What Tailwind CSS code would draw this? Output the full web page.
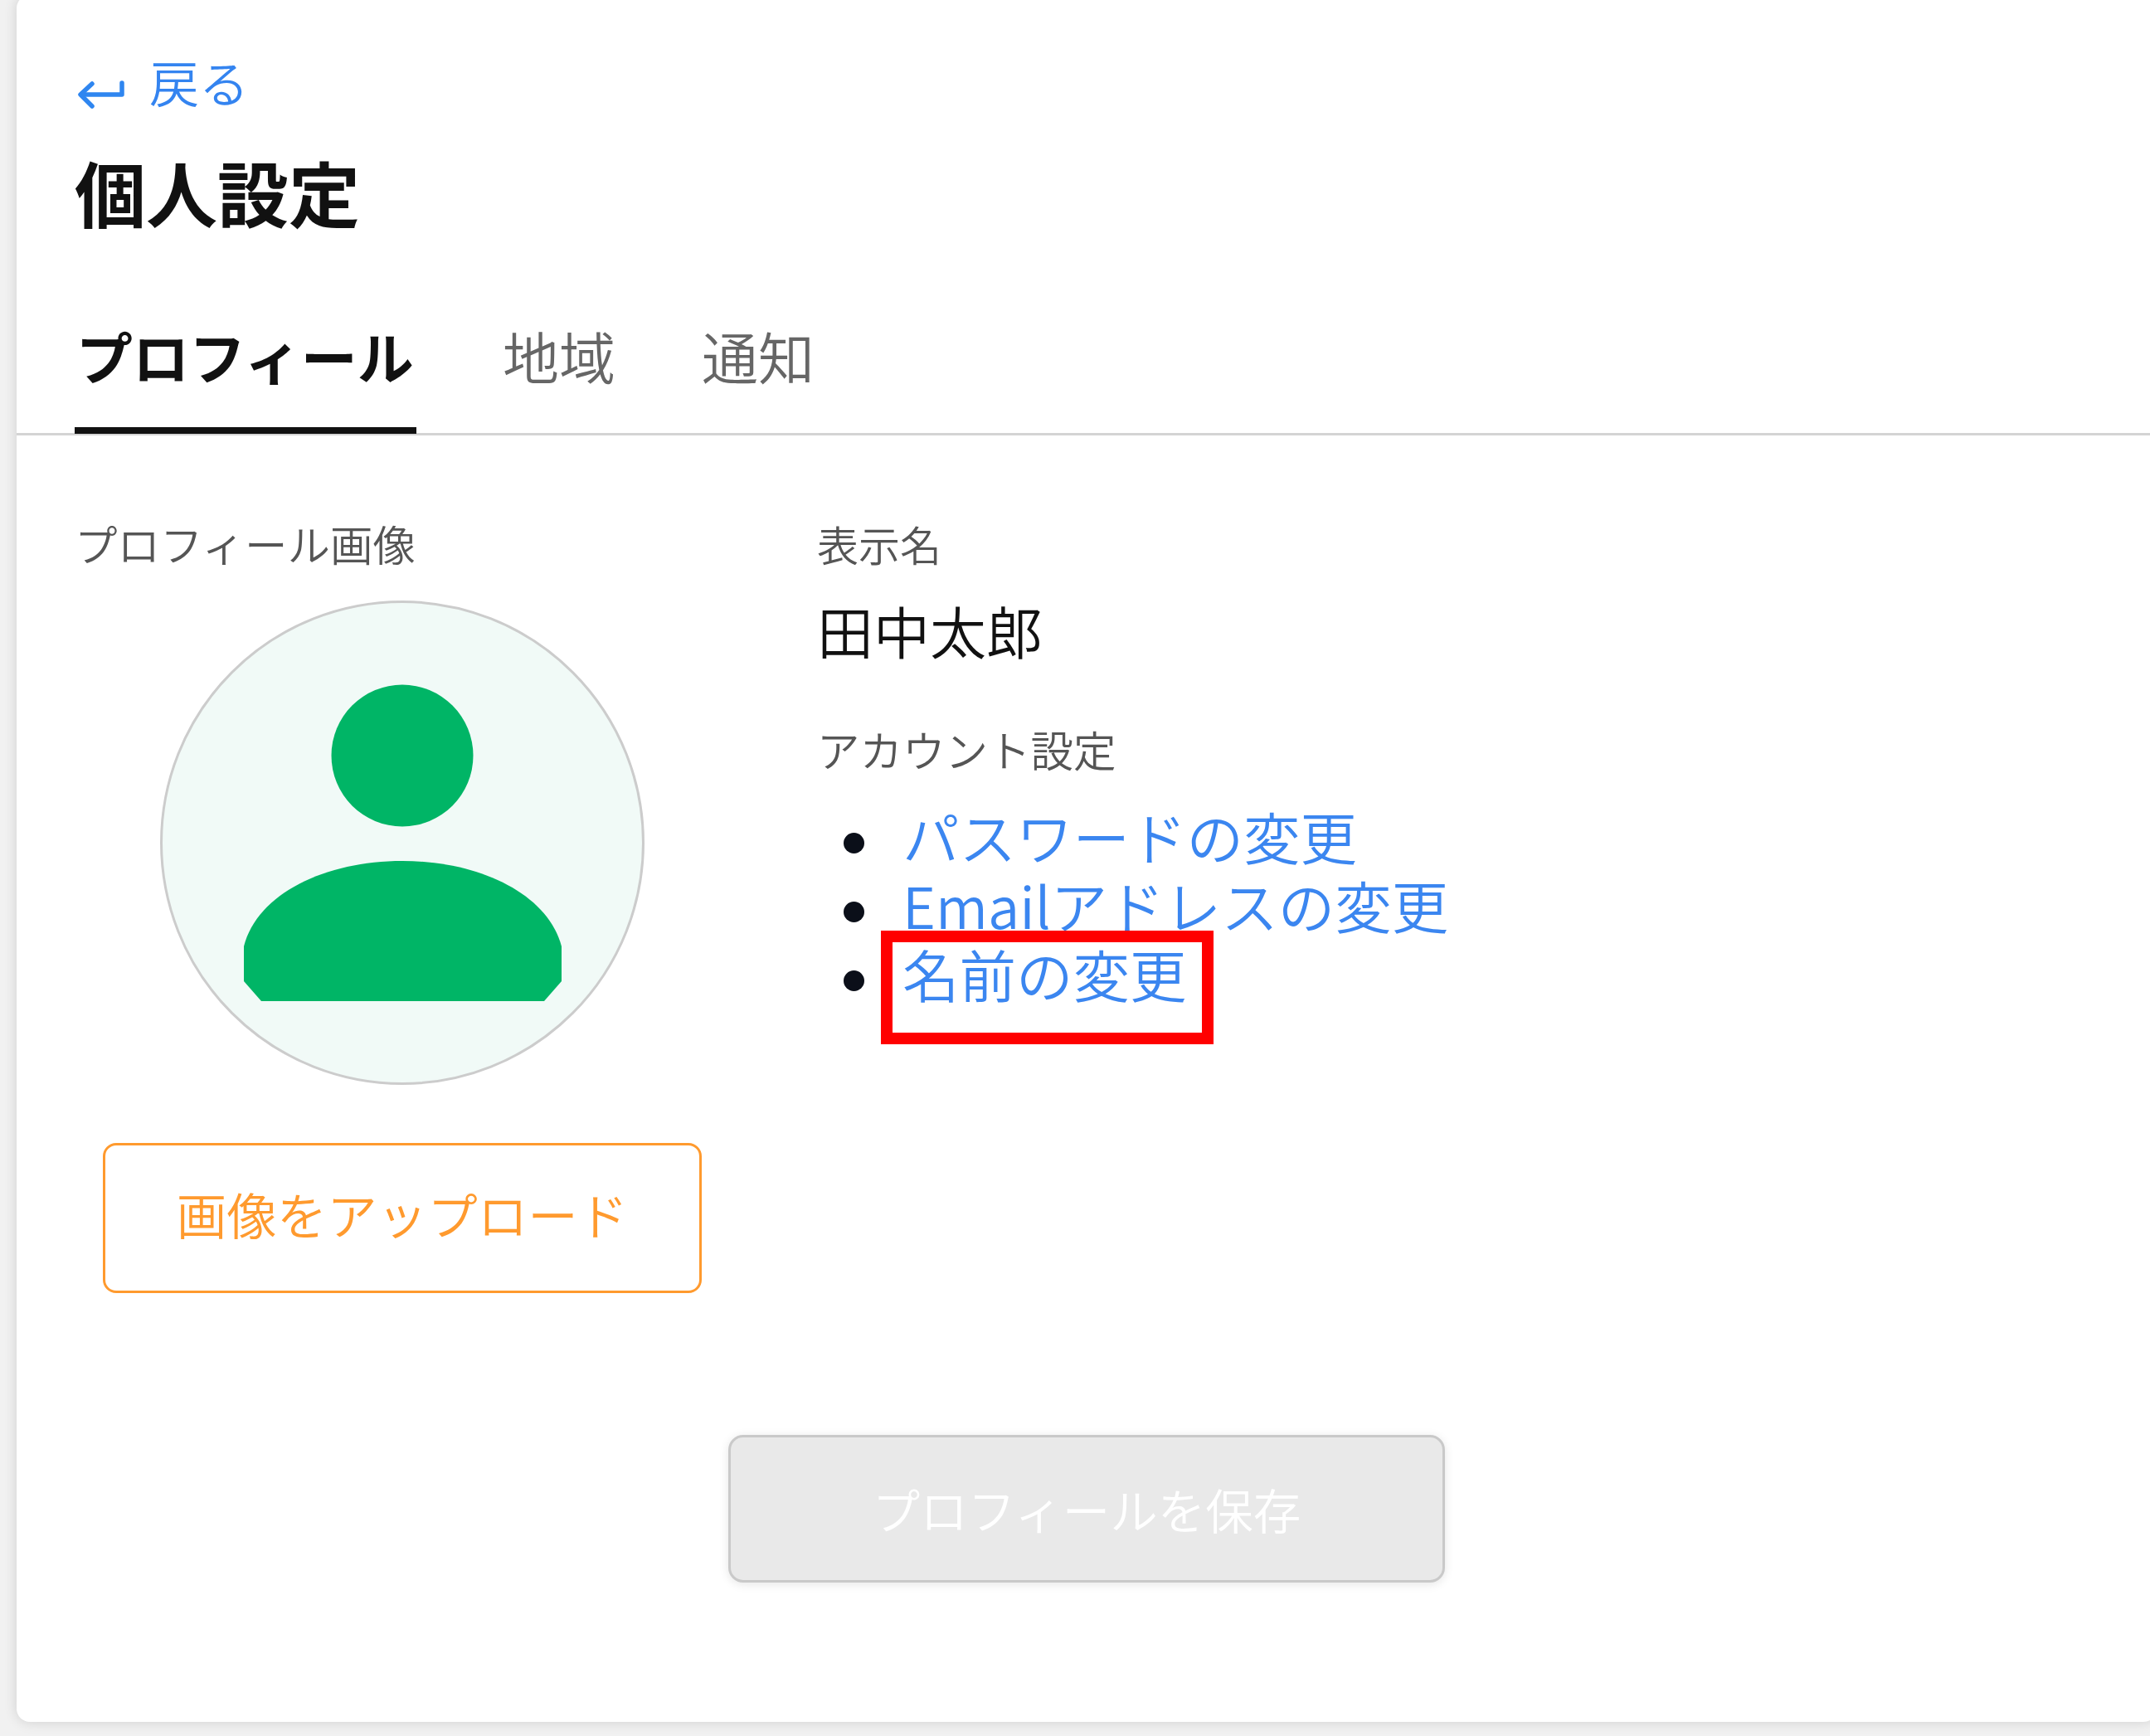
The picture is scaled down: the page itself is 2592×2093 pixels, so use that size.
<!DOCTYPE html>
<html lang="ja">

<head>
    <meta charset="UTF-8">
    <meta name="viewport" content="width=device-width, initial-scale=1.0">
    <title>個人設定</title>
    <script src="https://cdn.jsdelivr.net/npm/@tailwindcss/browser@4"></script>
</head>

<body class="h-[2093px] overflow-hidden bg-[#f1f1f1] font-['Noto_Sans_CJK_JP','Noto_Sans',sans-serif]">

    <!-- Card -->
    <div class="ml-[20px] -mt-[6px] h-[2082px] w-[2580px] rounded-[16px] bg-white pt-[74px] shadow-[0_0_16px_rgba(0,0,0,0.14)]">

        <div class="px-[70px]">
            <a class="flex items-start gap-[28px] text-[#3484f0]">
                <svg class="mt-[29px] w-[62px] h-[34px]" viewBox="0 0 62 34" fill="none" stroke="#2f86f0" stroke-width="5.5" stroke-linecap="round" stroke-linejoin="round">
                    <path d="M57 3V17H8"/>
                    <path d="M21 4L7 17L21 31"/>
                </svg>
                <span class="text-[60px] leading-[60px] font-[350]">戻る</span>
            </a>
            <h1 class="mt-[57px] text-[86px] leading-[86px] font-bold text-[#111111]">個人設定</h1>
        </div>

        <!-- Tabs -->
        <div class="mt-[121px] flex gap-[104px] border-b-[3px] border-[#d4d4d4] px-[70px]">
            <div class="-mb-[1px] w-[412px] border-b-[8px] border-[#111111] pb-[52px] pl-[2px] text-[68px] leading-[68px] font-bold text-[#111111]">プロフィール</div>
            <div class="text-[68px] leading-[68px] font-[350] text-[#666666]">地域</div>
            <div class="text-[68px] leading-[68px] font-[350] text-[#666666]">通知</div>
        </div>

        <!-- Profile -->
        <div class="mt-[105px] flex px-[70px]">
            <div class="flex w-[790px] flex-col items-center">
                <p class="self-start text-[51.5px] leading-[50px] font-[350] text-[#555555]">プロフィール画像</p>
                <div class="mt-[44px] size-[584px] rounded-full border-[3px] border-[#cccccc] bg-[#f1faf7]">
                    <svg class="size-full" viewBox="0 0 578 578" fill="#00b566">
                        <circle cx="289" cy="184" r="85.5"/>
                        <path d="M98 414C114 350 197 311 289 311C381 311 464 350 481 414V456L460 480H119L98 456Z"/>
                    </svg>
                </div>
                <button class="mt-[70px] h-[181px] w-[722px] rounded-[16px] border-[3px] border-[#ff9a2e] pb-[12px] text-[60.5px] leading-[60px] font-[350] text-[#ff9a2e]">画像をアップロード</button>
            </div>

            <div class="ml-[105px]">
                <p class="text-[50px] leading-[50px] font-[350] text-[#555555]">表示名</p>
                <p class="mt-[46px] text-[68px] leading-[68px] font-[350] text-[#111111]">田中太郎</p>
                <p class="mt-[84px] text-[51.5px] leading-[50px] font-[350] text-[#555555]">アカウント設定</p>
                <ul class="mt-[38px] pl-[32px] text-[68.5px] leading-[83px] font-[350]">
                    <li class="flex items-center gap-[46px]">
                        <span class="mt-[18px] size-[25px] rounded-full bg-[#0b0f19]"></span>
                        <a class="text-[#3b86f0]">パスワードの変更</a>
                    </li>
                    <li class="flex items-center gap-[46px]">
                        <span class="mt-[18px] size-[25px] rounded-full bg-[#0b0f19]"></span>
                        <a class="text-[#3b86f0]">Emailアドレスの変更</a>
                    </li>
                    <li class="flex items-center gap-[46px]">
                        <span class="mt-[18px] size-[25px] rounded-full bg-[#0b0f19]"></span>
                        <a class="relative text-[#3b86f0]">名前の変更
                            <!-- Annotation -->
                            <span class="absolute left-[-26px] top-[-10px] h-[137px] w-[401px] border-[14px] border-[#ff0000]"></span>
                        </a>
                    </li>
                </ul>
            </div>
        </div>

        <div class="flex justify-center px-[70px] pt-[171px]">
            <button class="h-[178px] w-[864px] rounded-[18px] border-[3px] border-[#c9c9c9] bg-[#e9e9e9] text-[57.5px] leading-[56px] font-[350] text-white shadow-[0_2px_12px_rgba(0,0,0,0.1)]">プロフィールを保存</button>
        </div>
    </div>

</body>

</html>
